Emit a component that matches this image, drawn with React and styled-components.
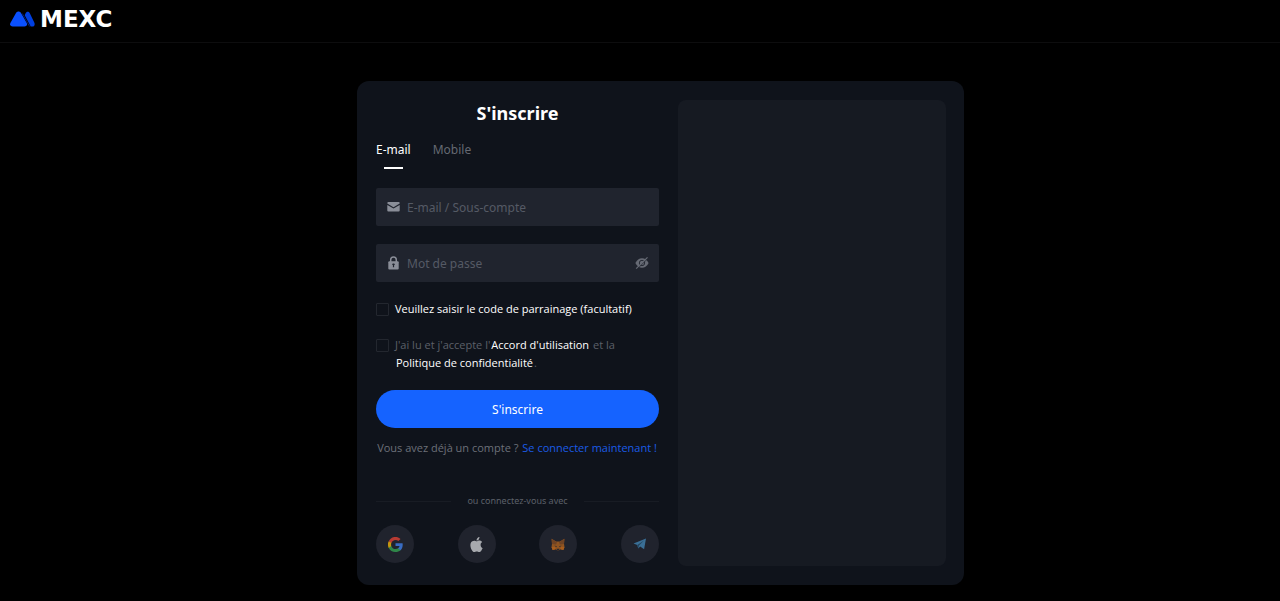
import React, { useState } from 'react'
import styled, { createGlobalStyle } from 'styled-components'

const GlobalStyle = createGlobalStyle`
  * {
    box-sizing: border-box;
  }

  body {
    margin: 0;
    background: #000;
    color: #fff;
    font-family: "Noto Sans", "Open Sans", sans-serif;
    font-size: 12px;
  }

  button,
  input {
    font-family: inherit;
  }
`

const Header = styled.header`
  display: flex;
  align-items: center;
  height: 43px;
  padding: 0 10px 4px;
  border-bottom: 1px solid #0d0d0e;
`

const Logo = styled.a`
  display: flex;
  align-items: center;
  gap: 5px;
  color: #fff;
  font-family: "DejaVu Sans", sans-serif;
  font-size: 23px;
  font-weight: 700;
  line-height: 22px;
  text-decoration: none;
`

const Main = styled.main`
  display: flex;
  justify-content: center;
  padding: 38px 0 16px 41px;
`

const Card = styled.section`
  display: flex;
  gap: 19px;
  width: 100%;
  max-width: 607px;
  padding: 19px 18px 19px 19px;
  border-radius: 12px;
  background: #0f131b;
`

const Form = styled.form`
  display: flex;
  flex: 1;
  flex-direction: column;
  padding-bottom: 3px;
`

const SidePanel = styled.aside`
  width: 268px;
  border-radius: 8px;
  background: #161a22;
`

const Title = styled.h1`
  margin: 0;
  font-size: 18px;
  font-weight: 700;
  line-height: 26px;
  text-align: center;
`

const Tabs = styled.div`
  display: flex;
  gap: 22px;
  margin: 12px 0 19px;
`

const Tab = styled.button`
  display: flex;
  flex-direction: column;
  align-items: center;
  gap: 5px;
  padding: 0;
  border: none;
  background: none;
  color: ${({ $active }) => ($active ? '#fff' : '#656972')};
  font-size: 12px;
  line-height: 24px;
  cursor: pointer;

  &::after {
    content: "";
    width: 19px;
    height: 2px;
    background: ${({ $active }) => ($active ? '#fff' : 'transparent')};
  }
`

const Field = styled.label`
  display: flex;
  align-items: center;
  gap: 7px;
  height: 38px;
  margin-bottom: 18px;
  padding: 0 10px 0 11px;
  border-radius: 2px;
  background: #20242e;
  color: #8a8e98;
`

const Input = styled.input`
  flex: 1;
  min-width: 0;
  padding: 0;
  border: none;
  outline: none;
  background: none;
  color: #fff;
  font-size: 12px;

  &::placeholder {
    color: #555a65;
    opacity: 1;
  }
`

const IconButton = styled.button`
  display: flex;
  padding: 0;
  border: none;
  background: none;
  color: #666a74;
  cursor: pointer;
`

const CheckRow = styled.div`
  display: flex;
  align-items: flex-start;
  gap: 6px;
  margin-bottom: 18px;
  color: #5c6069;
  font-family: "Open Sans", sans-serif;
  font-size: 11px;
  line-height: 18px;
`

const Checkbox = styled.input`
  flex: none;
  appearance: none;
  width: 13px;
  height: 13px;
  margin: 3px 0 0;
  border: 1px solid #23272f;
  border-radius: 1px;

  &:checked {
    background: #1563ff;
  }
`

const CheckLabel = styled.label`
  color: ${({ $bright }) => ($bright ? '#fff' : 'inherit')};
`

const TextLink = styled.a`
  margin: 0 1px;
  color: ${({ $blue }) => ($blue ? '#1b5be6' : '#fff')};
  text-decoration: none;
`

const SubmitButton = styled.button`
  height: 38px;
  border: none;
  border-radius: 19px;
  background: #1563ff;
  color: #fff;
  font-size: 12px;
  cursor: pointer;
`

const LoginHint = styled.p`
  margin: 11px 0 0;
  color: #6c7079;
  font-family: "Open Sans", sans-serif;
  font-size: 11px;
  line-height: 18px;
  text-align: center;
  white-space: nowrap;
`

const Divider = styled.div`
  display: flex;
  align-items: center;
  gap: 16px;
  margin: 37px 0 17px;
  color: #5c6069;
  font-size: 9px;
  line-height: 14px;

  &::before,
  &::after {
    content: "";
    flex: 1;
    height: 1px;
    background: #181c24;
  }
`

const Socials = styled.div`
  display: flex;
  justify-content: space-between;
`

const SocialButton = styled.button`
  display: flex;
  align-items: center;
  justify-content: center;
  width: 38px;
  height: 38px;
  padding: 0;
  border: none;
  border-radius: 50%;
  background: #20232d;
  cursor: pointer;
`

const LogoMark = () => (
  <svg width="25" height="16" viewBox="0 0 25 16" aria-hidden="true">
    <path
      d="M15.5 2.5C16.5.2 18.7.2 19.8 2.2L24.4 11.8C25.2 13.8 24.2 15.5 22.2 15.5H20.7L14.7 4.2Z"
      fill="#003fe0"
    />
    <path
      d="M.5 11.8 6 2.1C7.2.1 9.8.1 11 2.1L16.6 11.8C17.7 13.8 16.6 15.5 14.4 15.5H2.7C.5 15.5-.5 13.8.5 11.8Z"
      fill="#0a50ff"
    />
    <path d="M12.3 2.5 19.6 15.5" stroke="#001c78" strokeWidth="1" />
  </svg>
)

const MailIcon = () => (
  <svg width="13" height="10" viewBox="0 0 13 10" fill="currentColor" aria-hidden="true">
    <path d="M1.3 0H11.7Q12.7 0 12.7 1V1.6L6.5 5.3.3 1.6V1Q.3 0 1.3 0Z" />
    <path d="M.3 2.9 6.5 6.6 12.7 2.9V8.6Q12.7 9.6 11.7 9.6H1.3Q.3 9.6.3 8.6Z" />
  </svg>
)

const LockIcon = () => (
  <svg width="13" height="14" viewBox="0 0 13 14" aria-hidden="true">
    <path d="M3.7 6V3.7a2.8 2.8 0 0 1 5.6 0V6" fill="none" stroke="currentColor" strokeWidth="1.5" />
    <rect x="1.3" y="5.3" width="10.4" height="8.3" rx="1" fill="currentColor" />
    <path d="M6.5 7.6V11.2M5.3 8.3H7.7" stroke="#20242e" strokeWidth="1.2" />
  </svg>
)

const EyeOffIcon = () => (
  <svg width="14" height="14" viewBox="0 0 14 14" aria-hidden="true">
    <path
      d="M.4 7Q2.7 2.2 7 2.2T13.6 7Q11.3 11.8 7 11.8T.4 7Z"
      fill="currentColor"
    />
    <circle cx="7" cy="7" r="2.7" fill="none" stroke="#20242e" strokeWidth="0.9" />
    <path d="M2.2 13.1 13 2.3" stroke="#20242e" strokeWidth="0.8" />
    <path d="M1.2 12.7 12.5 1.3" stroke="currentColor" strokeWidth="1.2" />
  </svg>
)

const GoogleIcon = () => (
  <svg width="15" height="15" viewBox="0 0 24 24" opacity="0.75" aria-hidden="true">
    <path fill="#4285f4" d="M23.5 12.3c0-.8-.1-1.6-.2-2.3H12v4.5h6.5a5.6 5.6 0 0 1-2.4 3.6v3h3.9c2.2-2.1 3.5-5.1 3.5-8.8z" />
    <path fill="#34a853" d="M12 24c3.2 0 6-1.1 8-2.9l-3.9-3c-1.1.7-2.5 1.2-4.1 1.2-3.1 0-5.8-2.1-6.7-5H1.2v3.1A12 12 0 0 0 12 24z" />
    <path fill="#fbbc05" d="M5.3 14.3a7.2 7.2 0 0 1 0-4.6V6.6H1.2a12 12 0 0 0 0 10.8z" />
    <path fill="#ea4335" d="M12 4.7c1.8 0 3.4.6 4.6 1.8L20.1 3A12 12 0 0 0 1.2 6.6l4.1 3.1c.9-2.9 3.6-5 6.7-5z" />
  </svg>
)

const AppleIcon = () => (
  <svg width="15" height="15" viewBox="0 0 24 24" fill="#a7a9ae" aria-hidden="true">
    <path d="M12.2 6.9c-1 0-2.4-1.1-4-1-2 0-3.9 1.2-5 3-2.1 3.7-.5 9.1 1.5 12.1 1 1.5 2.2 3.1 3.8 3 1.5-.1 2.1-1 3.9-1s2.4 1 4 .9c1.6 0 2.7-1.5 3.7-2.9 1.2-1.7 1.6-3.3 1.7-3.4-.1 0-3.2-1.2-3.3-4.9 0-3.1 2.5-4.5 2.6-4.6-1.4-2.1-3.7-2.3-4.4-2.4-2-.1-3.7 1.2-4.5 1.2zM15.5 3.8C16.4 2.8 17 1.4 16.8 0c-1.2.1-2.7.8-3.5 1.8-.8.9-1.4 2.3-1.3 3.7 1.3.1 2.7-.7 3.5-1.7z" />
  </svg>
)

const FoxIcon = () => (
  <svg width="14" height="13" viewBox="0 0 14 13" aria-hidden="true">
    <path d="M.6.8 5.2 3.4H8.8L13.4.8 13 6 13.5 9.1 12.4 12 9.3 11.3 8 12.3H6L4.7 11.3 1.6 12 .5 9.1 1 6Z" fill="#8f5421" />
    <path d="M.6.8 6 4.5 5 6.6 1 6ZM13.4.8 8 4.5 9 6.6 13 6Z" fill="#6e4324" />
    <path d="M3.4 7.4 5.8 8.3 5.3 9.2ZM10.6 7.4 8.2 8.3 8.7 9.2ZM5.6 10.8H8.4L8 12H6Z" fill="#2a2a30" />
    <path d="M.5 9.1H4L4.7 11.3 1.6 12ZM13.5 9.1H10L9.3 11.3 12.4 12Z" fill="#a75d1c" />
  </svg>
)

const TelegramIcon = () => (
  <svg width="14" height="12" viewBox="0 0 14 12" aria-hidden="true">
    <path d="M.5 5.6 13 .5 11.1 11.2 7.2 8.4 5.2 10.5 4.3 6.9Z" fill="#3a6f96" />
    <path d="M4.3 6.9 11 2.4 6 7.5 5.2 10.5Z" fill="#24445d" />
  </svg>
)

const socials = [
  { name: 'Google', icon: <GoogleIcon /> },
  { name: 'Apple', icon: <AppleIcon /> },
  { name: 'MetaMask', icon: <FoxIcon /> },
  { name: 'Telegram', icon: <TelegramIcon /> },
]

const App = () => {
  const [tab, setTab] = useState('E-mail')
  const [showPassword, setShowPassword] = useState(false)

  return (
    <>
      <GlobalStyle />
      <Header>
        <Logo href="#">
          <LogoMark />
          MEXC
        </Logo>
      </Header>

      <Main>
        <Card>
          <Form onSubmit={(e) => e.preventDefault()}>
            <Title>S'inscrire</Title>

            <Tabs>
              {['E-mail', 'Mobile'].map((name) => (
                <Tab key={name} type="button" $active={tab === name} onClick={() => setTab(name)}>
                  {name}
                </Tab>
              ))}
            </Tabs>

            <Field>
              <MailIcon />
              <Input type="text" aria-label="E-mail / Sous-compte" placeholder="E-mail / Sous-compte" />
            </Field>
            <Field>
              <LockIcon />
              <Input
                type={showPassword ? 'text' : 'password'}
                aria-label="Mot de passe"
                placeholder="Mot de passe"
              />
              <IconButton
                type="button"
                aria-label="Afficher le mot de passe"
                onClick={() => setShowPassword(!showPassword)}
              >
                <EyeOffIcon />
              </IconButton>
            </Field>

            <CheckRow>
              <Checkbox type="checkbox" id="referral" />
              <CheckLabel htmlFor="referral" $bright>
                Veuillez saisir le code de parrainage (facultatif)
              </CheckLabel>
            </CheckRow>
            <CheckRow>
              <Checkbox type="checkbox" id="terms" />
              <CheckLabel htmlFor="terms">
                J'ai lu et j'accepte l'
                <TextLink href="#">Accord d'utilisation</TextLink> et la
                <br />
                <TextLink href="#">Politique de confidentialité</TextLink>.
              </CheckLabel>
            </CheckRow>

            <SubmitButton type="submit">S'inscrire</SubmitButton>

            <LoginHint>
              Vous avez déjà un compte ? <TextLink href="#" $blue>Se connecter maintenant !</TextLink>
            </LoginHint>

            <Divider>ou connectez-vous avec</Divider>

            <Socials>
              {socials.map((item) => (
                <SocialButton key={item.name} type="button" aria-label={item.name}>
                  {item.icon}
                </SocialButton>
              ))}
            </Socials>
          </Form>

          <SidePanel />
        </Card>
      </Main>
    </>
  )
}

export default App
